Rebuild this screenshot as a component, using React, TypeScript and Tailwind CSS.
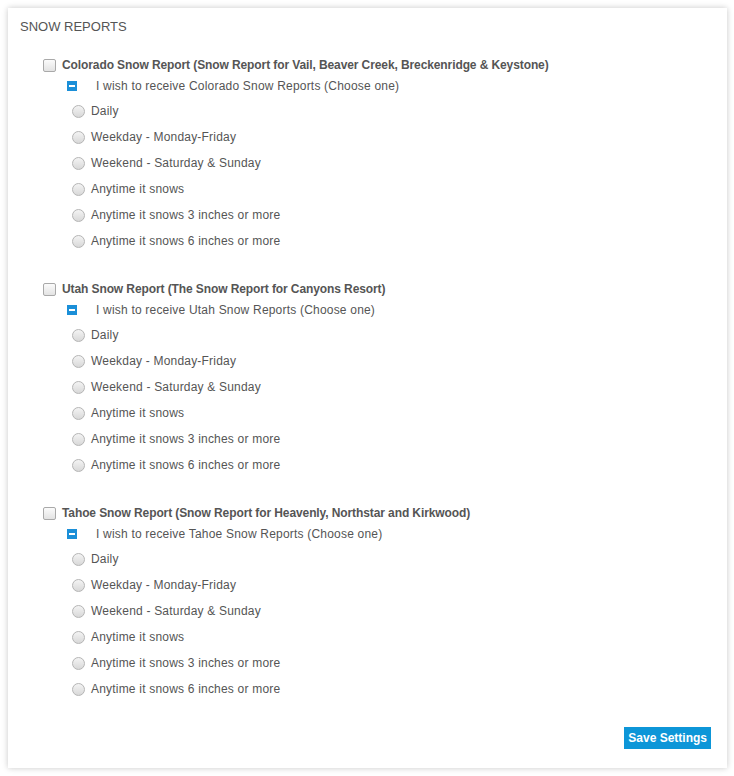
import React from "react";

const GROUPS = [
  {
    title:
      "Colorado Snow Report (Snow Report for Vail, Beaver Creek, Breckenridge & Keystone)",
    state: "Colorado",
  },
  { title: "Utah Snow Report (The Snow Report for Canyons Resort)", state: "Utah" },
  {
    title: "Tahoe Snow Report (Snow Report for Heavenly, Northstar and Kirkwood)",
    state: "Tahoe",
  },
];

const OPTIONS = [
  "Daily",
  "Weekday - Monday-Friday",
  "Weekend - Saturday & Sunday",
  "Anytime it snows",
  "Anytime it snows 3 inches or more",
  "Anytime it snows 6 inches or more",
];

function Radio() {
  return (
    <span className="block h-[13px] w-[13px] rounded-full border border-[#b5b5b5] bg-gradient-to-b from-[#f4f4f4] to-[#d8d8d8]" />
  );
}

function ReportGroup({ title, state }: { title: string; state: string }) {
  return (
    <div className="ml-[23px]">
      {/* group checkbox */}
      <div className="flex h-[22px] items-center">
        <span className="block h-[13px] w-[13px] rounded-[2px] border border-[#a9a9a9] bg-gradient-to-b from-[#fbfbfb] to-[#e3e3e3]" />
        <span className="ml-[6px] text-[12px] font-bold tracking-[-0.1px] text-[#555]">{title}</span>
      </div>
      <div className="mb-[2px] flex h-[20px] items-center pl-[24px]">
        <span className="flex h-[10px] w-[10px] items-center justify-center bg-[#1b8fd8]">
          <span className="block h-[2px] w-[6px] bg-white" />
        </span>
        <span className="ml-[19px] text-[12px] tracking-[0.2px] text-[#555]">
          I wish to receive {state} Snow Reports (Choose one)
        </span>
      </div>
      {OPTIONS.map((opt) => (
        <div key={opt} className="flex h-[26px] items-center pl-[29px]">
          <Radio />
          <span className="ml-[6px] text-[12px] tracking-[0.2px] text-[#555]">{opt}</span>
        </div>
      ))}
    </div>
  );
}

export default function App() {
  return (
    <div className="min-h-[776px] bg-white pt-2 pl-2 font-['Liberation_Sans',Arial,sans-serif]">
      <div className="w-[719px] bg-white pt-[10px] pr-[16px] pb-[19px] pl-[12px] shadow-[0_0_6px_rgba(0,0,0,0.22)]">
        <h2 className="h-[18px] text-[13px] leading-[18px] text-[#555]">SNOW REPORTS</h2>
        <div className="mt-[18px] flex flex-col gap-[24px]">
          {GROUPS.map((g) => (
            <ReportGroup key={g.state} title={g.title} state={g.state} />
          ))}
        </div>
        <div className="mt-[25px] flex justify-end">
          <button className="h-[22px] bg-[#0d96d8] px-[4px] text-[12px] font-bold text-white">
            Save Settings
          </button>
        </div>
      </div>
    </div>
  );
}
